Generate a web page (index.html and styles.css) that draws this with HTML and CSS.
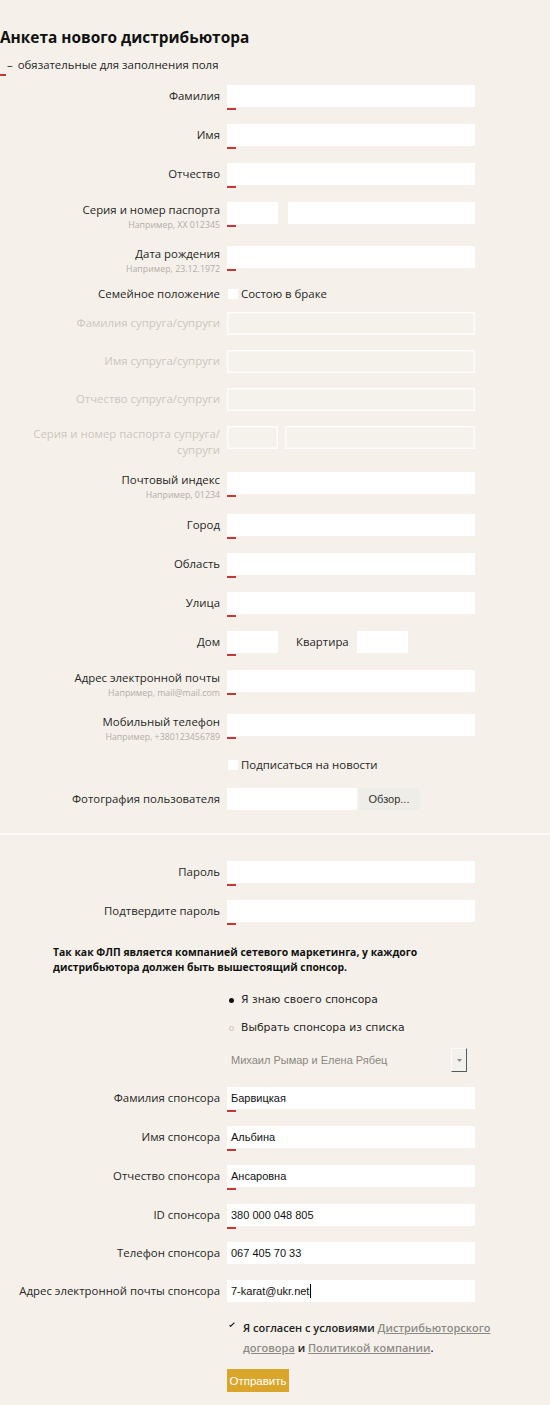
FILE: index.html
```html
<!DOCTYPE html>
<html lang="ru">
<head>
<meta charset="utf-8">
<title>Анкета нового дистрибьютора</title>
<link rel="stylesheet" href="styles.css">
</head>
<body>
<div class="page">
  <h1 class="title">Анкета нового дистрибьютора</h1>
  <p class="note"><span class="note-mark"></span><span class="note-dash">–</span><span>обязательные для заполнения поля</span></p>

  <div class="form">
    <div class="row">
      <div class="lbl">Фамилия</div>
      <div class="ctrl req"><div class="inp"></div></div>
    </div>
    <div class="row">
      <div class="lbl">Имя</div>
      <div class="ctrl req"><div class="inp"></div></div>
    </div>
    <div class="row">
      <div class="lbl">Отчество</div>
      <div class="ctrl req"><div class="inp"></div></div>
    </div>
    <div class="row">
      <div class="lbl lbl-hint">Серия и номер паспорта<span class="hint">Например, XX 012345</span></div>
      <div class="ctrl req pair"><div class="inp w-s"></div><div class="inp"></div></div>
    </div>
    <div class="row">
      <div class="lbl lbl-hint">Дата рождения<span class="hint">Например, 23.12.1972</span></div>
      <div class="ctrl req"><div class="inp"></div></div>
    </div>
    <div class="row row-check row-marital">
      <div class="lbl">Семейное положение</div>
      <div class="ctrl"><div class="check"><span class="box"></span>Состою в браке</div></div>
    </div>

    <div class="row row-dis">
      <div class="lbl">Фамилия супруга/супруги</div>
      <div class="ctrl"><div class="inp dis"></div></div>
    </div>
    <div class="row row-dis">
      <div class="lbl">Имя супруга/супруги</div>
      <div class="ctrl"><div class="inp dis"></div></div>
    </div>
    <div class="row row-dis">
      <div class="lbl">Отчество супруга/супруги</div>
      <div class="ctrl"><div class="inp dis"></div></div>
    </div>
    <div class="row row-dis row-dis-last">
      <div class="lbl lbl-2">Серия и номер паспорта супруга/<br>супруги</div>
      <div class="ctrl pair-dis"><div class="inp dis w-s"></div><div class="inp dis"></div></div>
    </div>

    <div class="row row-postal">
      <div class="lbl lbl-hint">Почтовый индекс<span class="hint">Например, 01234</span></div>
      <div class="ctrl req"><div class="inp"></div></div>
    </div>
    <div class="row">
      <div class="lbl">Город</div>
      <div class="ctrl req"><div class="inp"></div></div>
    </div>
    <div class="row">
      <div class="lbl">Область</div>
      <div class="ctrl req"><div class="inp"></div></div>
    </div>
    <div class="row">
      <div class="lbl">Улица</div>
      <div class="ctrl req"><div class="inp"></div></div>
    </div>
    <div class="row">
      <div class="lbl">Дом</div>
      <div class="ctrl req"><div class="inp w-s"></div><span class="sub-lbl">Квартира</span><div class="inp w-s"></div></div>
    </div>
    <div class="row">
      <div class="lbl lbl-hint">Адрес электронной почты<span class="hint">Например, mail@mail.com</span></div>
      <div class="ctrl req"><div class="inp"></div></div>
    </div>
    <div class="row">
      <div class="lbl lbl-hint">Мобильный телефон<span class="hint">Например, +380123456789</span></div>
      <div class="ctrl req"><div class="inp"></div></div>
    </div>
    <div class="row row-check row-sub">
      <div class="lbl"></div>
      <div class="ctrl"><div class="check"><span class="box"></span>Подписаться на новости</div></div>
    </div>
    <div class="row row-photo">
      <div class="lbl">Фотография пользователя</div>
      <div class="ctrl"><div class="file"></div><div class="browse">Обзор...</div></div>
    </div>
  </div>

  <hr class="sep">

  <div class="form">
    <div class="row">
      <div class="lbl">Пароль</div>
      <div class="ctrl req"><div class="inp"></div></div>
    </div>
    <div class="row">
      <div class="lbl">Подтвердите пароль</div>
      <div class="ctrl req"><div class="inp"></div></div>
    </div>

    <p class="sponsor-note">Так как ФЛП является компанией сетевого маркетинга, у каждого<br>дистрибьютора должен быть вышестоящий спонсор.</p>

    <div class="row row-radio">
      <div class="lbl"></div>
      <div class="ctrl"><div class="radio"><span class="dot"></span>Я знаю своего спонсора</div></div>
    </div>
    <div class="row row-radio row-radio2">
      <div class="lbl"></div>
      <div class="ctrl"><div class="radio"><span class="dot off"></span>Выбрать спонсора из списка</div></div>
    </div>
    <div class="row row-select">
      <div class="lbl"></div>
      <div class="ctrl">
        <div class="select">
          <span class="sel-text">Михаил Рымар и Елена Рябец</span>
          <span class="sel-btn"><svg width="5" height="3" viewBox="0 0 5 3"><path d="M0 0H5L2.5 3Z" fill="#8a8a8a"/></svg></span>
        </div>
      </div>
    </div>

    <div class="row">
      <div class="lbl">Фамилия спонсора</div>
      <div class="ctrl req"><div class="inp val">Барвицкая</div></div>
    </div>
    <div class="row">
      <div class="lbl">Имя спонсора</div>
      <div class="ctrl req"><div class="inp val">Альбина</div></div>
    </div>
    <div class="row">
      <div class="lbl">Отчество спонсора</div>
      <div class="ctrl req"><div class="inp val">Ансаровна</div></div>
    </div>
    <div class="row row-id">
      <div class="lbl">ID спонсора</div>
      <div class="ctrl req"><div class="inp val">380 000 048 805</div></div>
    </div>
    <div class="row row-nomark">
      <div class="lbl">Телефон спонсора</div>
      <div class="ctrl"><div class="inp val">067 405 70 33</div></div>
    </div>
    <div class="row row-nomark">
      <div class="lbl">Адрес электронной почты спонсора</div>
      <div class="ctrl"><div class="inp val">7-karat@ukr.net<span class="caret"></span></div></div>
    </div>

    <div class="row row-agree">
      <div class="lbl"></div>
      <div class="ctrl">
        <div class="agree">
          <svg class="tick" width="6" height="5" viewBox="0 0 6 5"><path d="M0.6 3.2L1.6 4.3L5.4 0.6" fill="none" stroke="#222" stroke-width="1.2"/></svg>
          <p class="agree-text">Я согласен с условиями <a href="#">Дистрибьюторского</a><br><a href="#">договора</a> и <a href="#">Политикой компании</a>.</p>
        </div>
      </div>
    </div>
    <div class="row row-submit">
      <div class="lbl"></div>
      <div class="ctrl"><button class="submit" type="button">Отправить</button></div>
    </div>
  </div>
</div>
</body>
</html>
```

FILE: styles.css
```css
* { box-sizing: border-box; }
html, body { margin: 0; padding: 0; }
body {
  background: #f5f1ea;
  font-family: "Open Sans", "DejaVu Sans", sans-serif;
  font-size: 11.4px;
  color: #262626;
}
.page { width: 550px; min-height: 1405px; padding-top: 28px; }
.title {
  margin: 0;
  font-size: 15.4px;
  font-weight: 700;
  line-height: 20px;
  color: #111;
}
.note {
  display: flex;
  align-items: flex-start;
  margin: 9px 0 9px;
  line-height: 16px;
  color: #262626;
}
.note-mark {
  width: 6px;
  height: 2px;
  margin-top: 17px;
  background: #c0393b;
  flex: none;
}
.note-dash { margin: 0 5px 0 1px; }
.form { width: 550px; }
.row {
  display: grid;
  grid-template-columns: 220px 248px;
  column-gap: 7px;
  align-items: start;
  margin-bottom: 14px;
}
.lbl {
  text-align: right;
  line-height: 16px;
  padding-top: 3px;
}
.lbl-hint { padding-top: 0; }
.lbl-2 { padding-top: 0; }
.hint {
  display: block;
  font-size: 8.8px;
  line-height: 14px;
  color: #b2aea7;
}
.ctrl { display: flex; align-items: center; }
.req {
  padding-bottom: 3px;
  background: linear-gradient(#c0393b, #c0393b) no-repeat left bottom / 9px 2px;
}
.inp {
  flex: 1;
  height: 22px;
  background: #fff;
}
.inp.w-s { flex: none; width: 51px; }
.pair { gap: 10px; }
.pair-dis { gap: 7px; }
.inp.dis {
  height: 23px;
  background: #f5f2ec;
  border: 1px solid #fdfcfa;
  box-shadow: inset 0 0 0 1px #f9f7f3;
}
.row-dis { margin-bottom: 15px; }
.row-dis-last { margin-bottom: 14px; }
.row-dis .lbl { color: #cbc7bf; }
.row-postal { margin-bottom: 12px; }
.sub-lbl { margin: 0 8px 0 18px; line-height: 22px; }

.row-check { margin-bottom: 10px; }
.row-marital { margin-top: -4px; }
.row-check .lbl { padding-top: 0; }
.row-sub { margin-top: -1px; margin-bottom: 15px; }
.check { display: flex; align-items: center; line-height: 16px; }
.box {
  width: 10px;
  height: 10px;
  margin: 0 3px 0 1px;
  background: #fff;
}

.row-photo { margin-bottom: 0; }
.file { width: 130px; height: 22px; background: #fff; }
.browse {
  width: 60px;
  height: 22px;
  margin-left: 2px;
  background: #efede8;
  font-family: "Liberation Sans", Arial, sans-serif;
  font-size: 11px;
  line-height: 22px;
  text-align: center;
  color: #333;
}

.sep {
  margin: 23px 0 26px;
  border: 0;
  height: 2px;
  background: #fbf9f5;
}

.sponsor-note {
  margin: 20px 0 17px 53px;
  font-size: 10.4px;
  font-weight: 700;
  line-height: 15px;
  color: #111;
}
.row-radio { margin-bottom: 12px; }
.row-radio2 { margin-bottom: 13px; }
.row-radio .lbl { padding: 0; }
.radio {
  display: flex;
  align-items: center;
  line-height: 16px;
  font-family: "DejaVu Sans", Verdana, sans-serif;
  font-size: 10.8px;
}
.dot {
  width: 5px;
  height: 5px;
  border-radius: 50%;
  background: #111;
  margin: 0 7px 0 2px;
}
.dot.off { background: transparent; border: 1px solid #c8c4bc; }

.row-select { margin-bottom: 16px; }
.row-select .lbl { padding: 0; }
.select {
  display: flex;
  align-items: center;
  width: 240px;
  height: 22px;
}
.sel-text {
  flex: 1;
  padding-left: 4px;
  font-family: "Liberation Sans", Arial, sans-serif;
  font-size: 11px;
  color: #8a8782;
}
.sel-btn {
  display: flex;
  align-items: center;
  justify-content: center;
  width: 16px;
  height: 24px;
  background: #f3f1ed;
  border-top: 1px solid #fbfaf8;
  border-left: 1px solid #fbfaf8;
  border-right: 1px solid #5a5a5a;
  border-bottom: 1px solid #5a5a5a;
}
.inp.val {
  padding-left: 4px;
  font-family: "Liberation Sans", Arial, sans-serif;
  font-size: 11px;
  line-height: 22px;
  color: #111;
}
.caret {
  display: inline-block;
  width: 1px;
  height: 14px;
  margin-left: 1px;
  vertical-align: -3px;
  background: #000;
}
.row-id { margin-bottom: 13px; }
.row-nomark { margin-bottom: 16px; }

.row-agree { grid-template-columns: 220px 300px; margin-bottom: 11px; }
.agree { display: flex; align-items: flex-start; }
.tick { flex: none; margin: 4px 8px 0 2px; }
.agree-text {
  margin: 0;
  font-size: 11px;
  font-weight: 600;
  line-height: 20px;
  color: #222;
}
.agree-text a { color: #8c8a86; text-decoration: underline; }

.submit {
  width: 62px;
  height: 23px;
  padding: 0;
  border: 0;
  background: #d9a62b;
  color: #fff;
  font-family: "Liberation Sans", Arial, sans-serif;
  font-size: 11.5px;
  cursor: pointer;
}
```
